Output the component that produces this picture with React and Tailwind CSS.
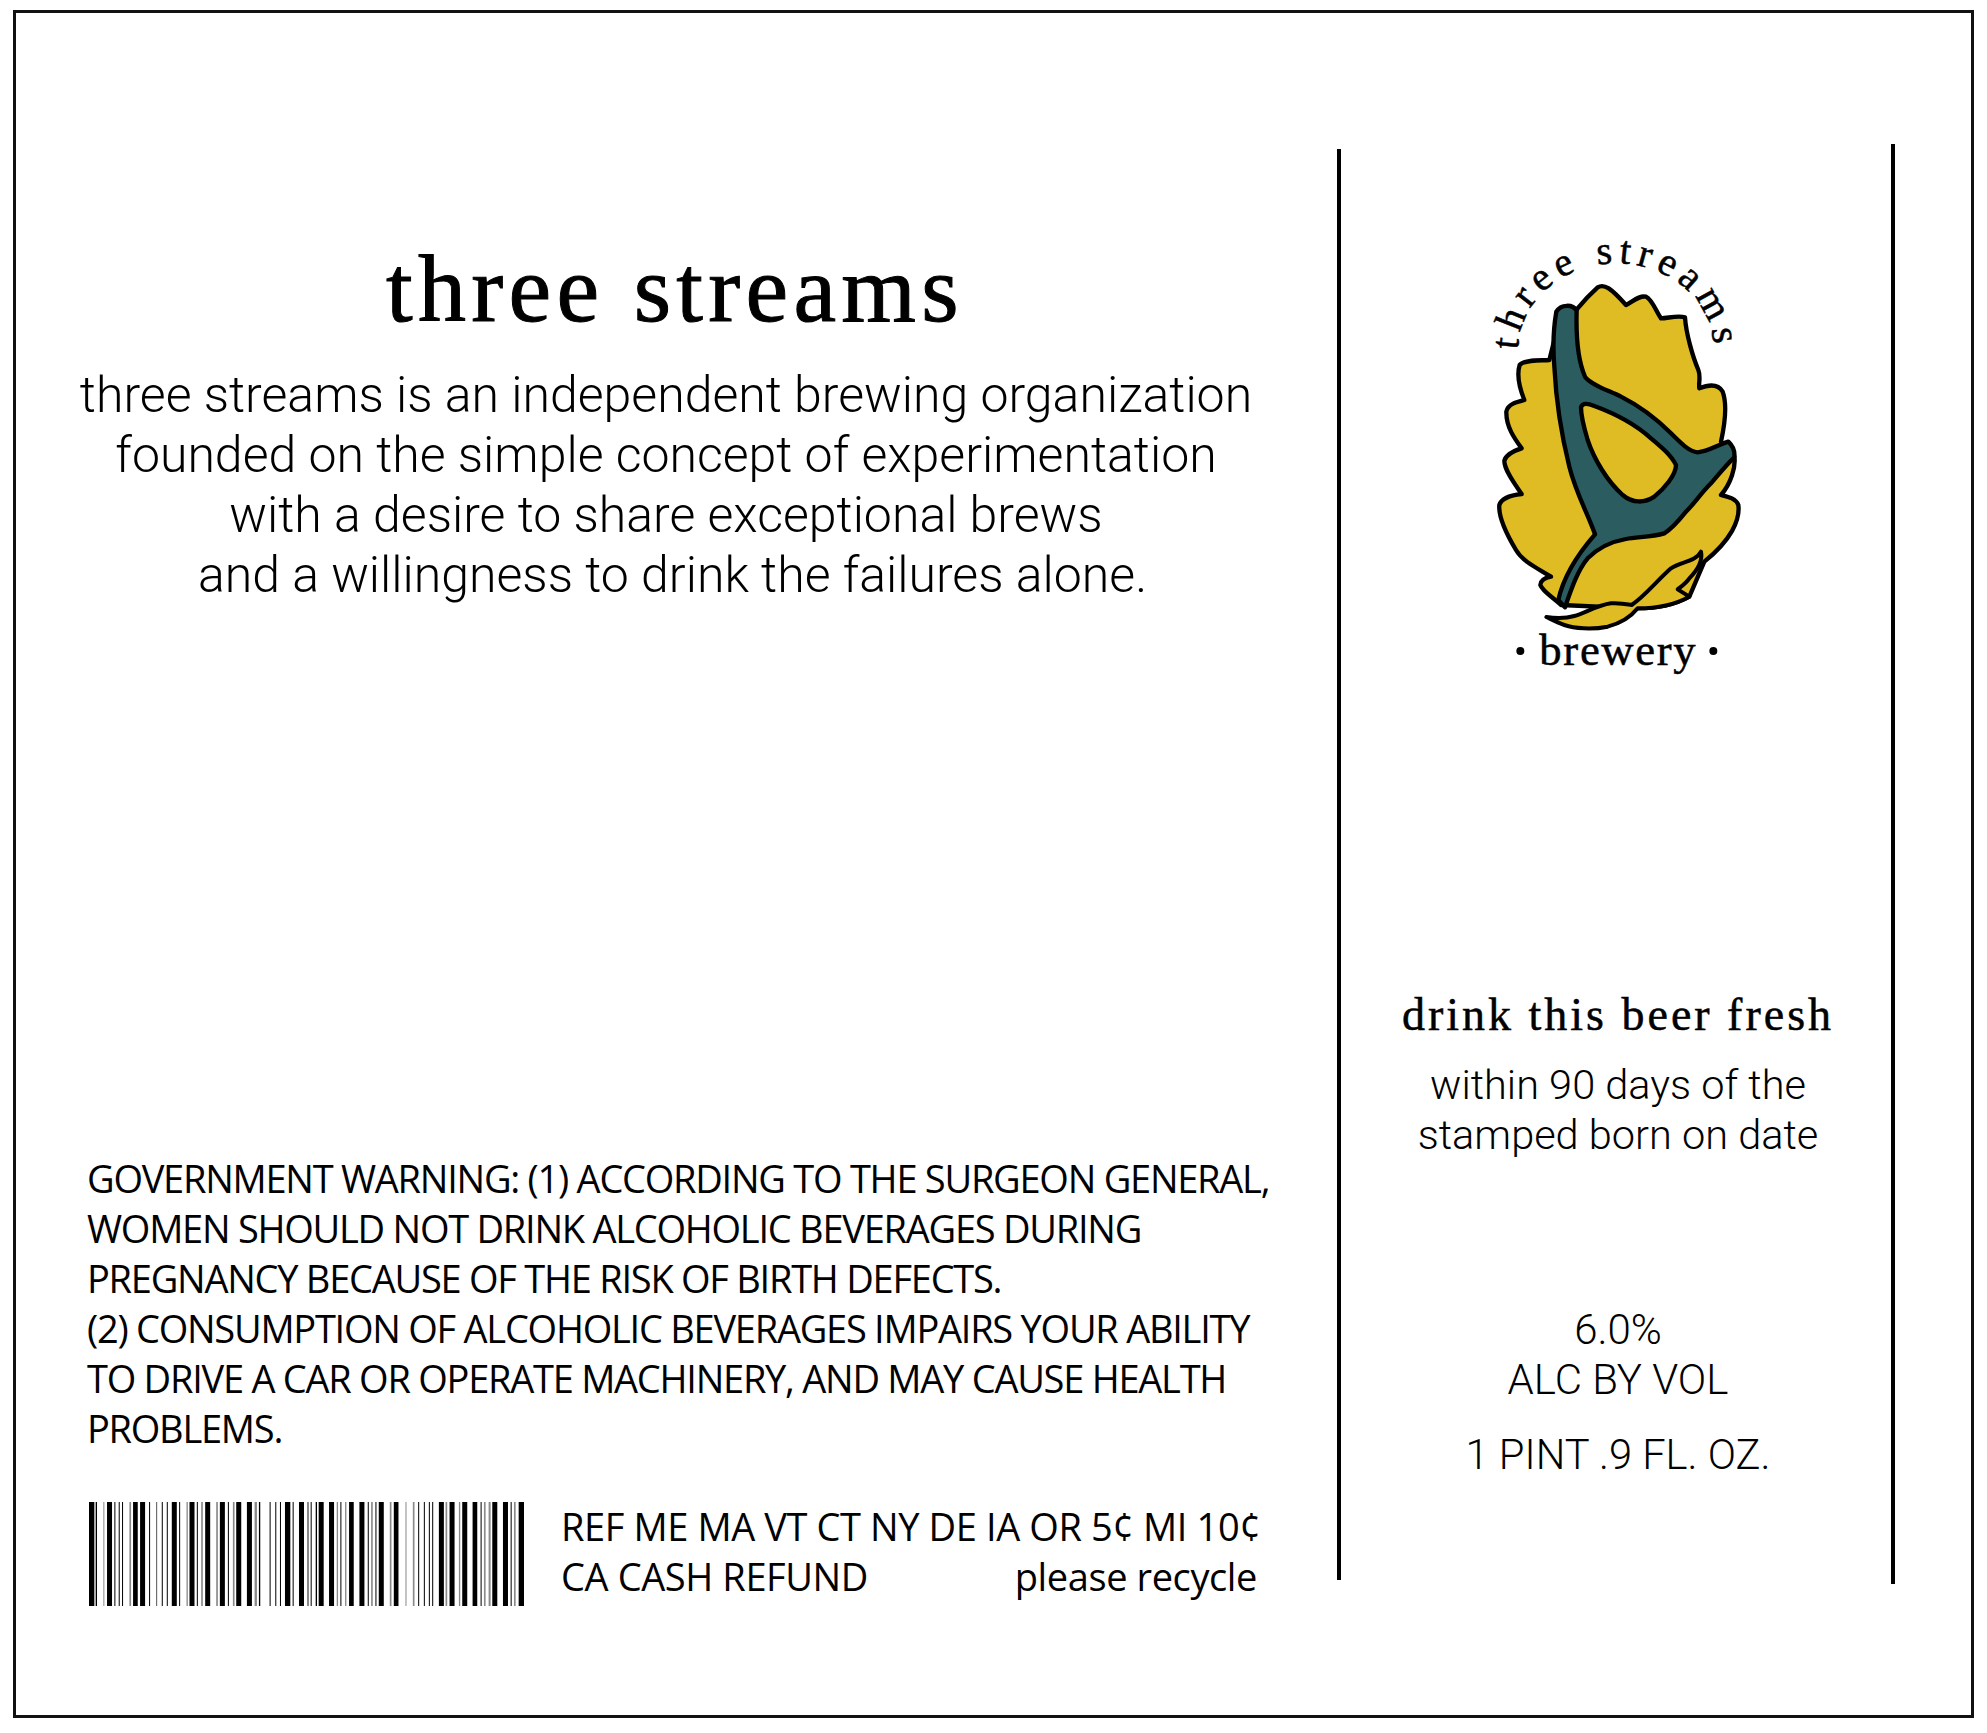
const BARS = [
  [87,16,1],[107,4,1],[130,3,0],[141,15,1],[163,3,1],[176,3,1],[186,3,1],[208,5,0],[219,14,1],[240,15,1],[267,3,1],[289,2,1],[305,3,1],[320,3,1],[335,15,1],[357,3,1],[379,4,0],[388,15,1],[410,3,1],[423,5,0],[435,15,1],[468,5,0],[479,15,1],[503,3,1],[518,5,0],[528,15,1],[560,15,1],[583,7,0],[596,4,1],[628,3,1],[645,3,1],[659,3,1],[674,16,1],[697,3,1],[716,15,1],[740,6,0],[751,3,1],[766,4,1],[775,15,1],[806,15,1],[829,4,0],[840,3,1],[854,4,0],[866,14,1],[897,15,1],[922,3,1],[932,5,0],[945,3,1],[955,15,1],[988,5,0],[1000,14,1],[1035,3,0],[1057,5,0],[1073,3,1],[1090,3,1],[1105,3,1],[1115,3,1],[1135,15,1],[1155,5,0],[1167,15,1],[1195,4,0],[1205,15,1],[1236,14,1],[1260,3,1],[1270,5,0],[1284,6,0],[1295,15,1],[1327,15,1],[1350,3,1],[1360,5,0],[1374,16,1],
];

function Logo() {
  return (
    <svg width="370" height="490" viewBox="-30 0 1110 1470" className="block mx-auto">
      <path
        d="M410 325 C430 300 450 280 470 262 C490 250 510 265 555 315 C575 305 595 285 615 290 C635 300 645 335 660 355 C680 355 710 345 732 352 C735 400 755 470 772 510 C780 530 772 550 775 565 C800 555 830 550 845 575 C858 610 852 670 840 725 L880 770 C885 800 870 850 840 885 C860 890 885 895 892 915 C898 960 870 1020 790 1085 L745 1190 C700 1215 640 1225 590 1225 L360 1215 C340 1195 305 1175 298 1155 C298 1140 315 1133 330 1130 C290 1105 245 1085 225 1050 C195 1000 172 950 175 915 C182 892 215 885 242 882 C220 850 190 810 190 782 C195 762 220 752 242 745 C220 715 195 680 196 635 C200 612 230 605 250 600 C238 570 225 530 236 495 C250 478 300 482 325 480 L345 400 Z"
        fill="#e0bc24" stroke="#000" strokeWidth="13" strokeLinejoin="round"
      />
      <path
        d="M346 335 C360 312 395 312 407 332 C405 400 410 480 432 530 C450 555 500 570 540 590 C600 620 650 660 690 700 C720 730 745 755 770 757 C800 755 830 735 862 725 C878 740 882 755 880 772 C860 790 840 815 810 850 C780 880 760 910 735 935 C715 960 695 985 670 1000 C630 1012 590 1010 555 1017 C510 1025 470 1045 440 1075 C410 1110 390 1170 372 1222 L352 1200 C365 1140 395 1080 462 1003 C440 940 405 880 385 800 C360 700 345 600 340 500 C335 440 338 380 346 335 Z"
        fill="#2a5c60" stroke="#000" strokeWidth="13" strokeLinejoin="round"
      />
      <path
        d="M420 622 C425 608 440 610 460 618 C520 640 580 670 630 715 C660 740 690 765 705 795 C705 825 670 865 640 890 C610 910 575 910 545 885 C500 845 460 780 440 720 C428 680 420 650 420 622 Z"
        fill="#e0bc24" stroke="#000" strokeWidth="13" strokeLinejoin="round"
      />
      <path
        d="M316 1251 C345 1255 375 1255 400 1248 C430 1240 470 1215 510 1210 C535 1208 555 1212 572 1215 C610 1190 650 1140 690 1105 C720 1085 765 1085 780 1055 C785 1080 770 1110 745 1135 C735 1150 720 1160 710 1168 L745 1190 C700 1215 640 1225 590 1225 C570 1250 540 1270 500 1280 C450 1290 400 1285 370 1275 C350 1268 335 1260 316 1251 Z"
        fill="#e0bc24" stroke="#000" strokeWidth="12" strokeLinejoin="round"
      />
      <defs>
        <path id="arc" d="M232 450 A293 260 0 0 1 818 450" />
      </defs>
      <text className="font-['Liberation_Serif',serif]" fontSize="120" fill="#000" letterSpacing="18" stroke="#000" strokeWidth="1.5">
        <textPath href="#arc">three streams</textPath>
      </text>
      <circle cx="238" cy="1353" r="12" fill="#000" />
      <circle cx="817" cy="1353" r="12" fill="#000" />
      <text x="532" y="1395" textAnchor="middle" className="font-['Liberation_Serif',serif]" fontSize="134" fill="#000" letterSpacing="5" stroke="#000" strokeWidth="1.5">brewery</text>
    </svg>
  );
}

function Barcode() {
  return (
    <svg width="435" height="104" viewBox="87 62 1303 310" preserveAspectRatio="none" className="block shrink-0">
      {BARS.map(([x, w, dark]) => (
        <rect key={x} x={x} y="62" width={w} height="310" fill={dark ? "#000" : "#8a8a8a"} />
      ))}
    </svg>
  );
}

export default function App() {
  return (
    <div className="w-[1987px] h-[1733px] bg-white pt-[10px] pl-[13px]">
      <div className="w-[1961px] h-[1708px] border-[3px] border-[#111] flex text-black">
        <div className="w-[1321px] shrink-0 flex flex-col">
          <h1 className="mt-[226px] w-[1318px] text-center font-['Liberation_Serif',serif] text-[96px] leading-[100px] tracking-[5.3px] font-normal [-webkit-text-stroke:1px_black]">
            three streams
          </h1>
          <p className="mt-[26px] w-[1300px] text-center font-['Roboto',sans-serif] font-light text-[50px] leading-[60px]">
            three streams is an independent brewing organization
            <br />
            founded on the simple concept of experimentation
            <br />
            with a desire to share exceptional brews
            <br />
            <span className="inline-block pl-[13px]">and a willingness to drink the failures alone.</span>
          </p>
          <p className="mt-[548px] ml-[71px] font-['Open_Sans',sans-serif] text-[38px] leading-[50px] tracking-[-1.25px] whitespace-nowrap">
            GOVERNMENT WARNING: (1) ACCORDING TO THE SURGEON GENERAL,
            <br />
            WOMEN SHOULD NOT DRINK ALCOHOLIC BEVERAGES DURING
            <br />
            PREGNANCY BECAUSE OF THE RISK OF BIRTH DEFECTS.
            <br />
            (2) CONSUMPTION OF ALCOHOLIC BEVERAGES IMPAIRS YOUR ABILITY
            <br />
            TO DRIVE A CAR OR OPERATE MACHINERY, AND MAY CAUSE HEALTH
            <br />
            PROBLEMS.
          </p>
          <div className="mt-[49px] ml-[73px] flex items-start">
            <Barcode />
            <div className="ml-[37px] -mt-[1px] w-[696px] font-['Open_Sans',sans-serif] text-[38px] leading-[50px] tracking-[-0.4px] whitespace-nowrap">
              <div>REF ME MA VT CT NY DE IA OR 5¢ MI 10¢</div>
              <div className="flex justify-between">
                <span>CA CASH REFUND</span>
                <span>please recycle</span>
              </div>
            </div>
          </div>
        </div>
        <div className="w-[4px] h-[1431px] mt-[136px] bg-black shrink-0" />
        <div className="w-[550px] shrink-0 flex flex-col items-center text-center">
          <div className="mt-[187px]">
            <Logo />
          </div>
          <div className="pl-[4px] mt-[300px] font-['Liberation_Serif',serif] text-[46px] leading-[50px] tracking-[3px] [-webkit-text-stroke:0.5px_black]">
            drink this beer fresh
          </div>
          <div className="pl-[4px] mt-[20px] font-['Roboto',sans-serif] font-light text-[41.5px] leading-[50px]">
            within 90 days of the
            <br />
            stamped born on date
          </div>
          <div className="pl-[4px] mt-[145px] font-['Roboto',sans-serif] font-light text-[42px] leading-[50px]">
            6.0%
            <br />
            ALC BY VOL
          </div>
          <div className="pl-[4px] mt-[25px] font-['Roboto',sans-serif] font-light text-[41.7px] leading-[50px]">
            1 PINT .9 FL. OZ.
          </div>
        </div>
        <div className="w-[4px] h-[1440px] mt-[131px] bg-black shrink-0" />
      </div>
    </div>
  );
}
